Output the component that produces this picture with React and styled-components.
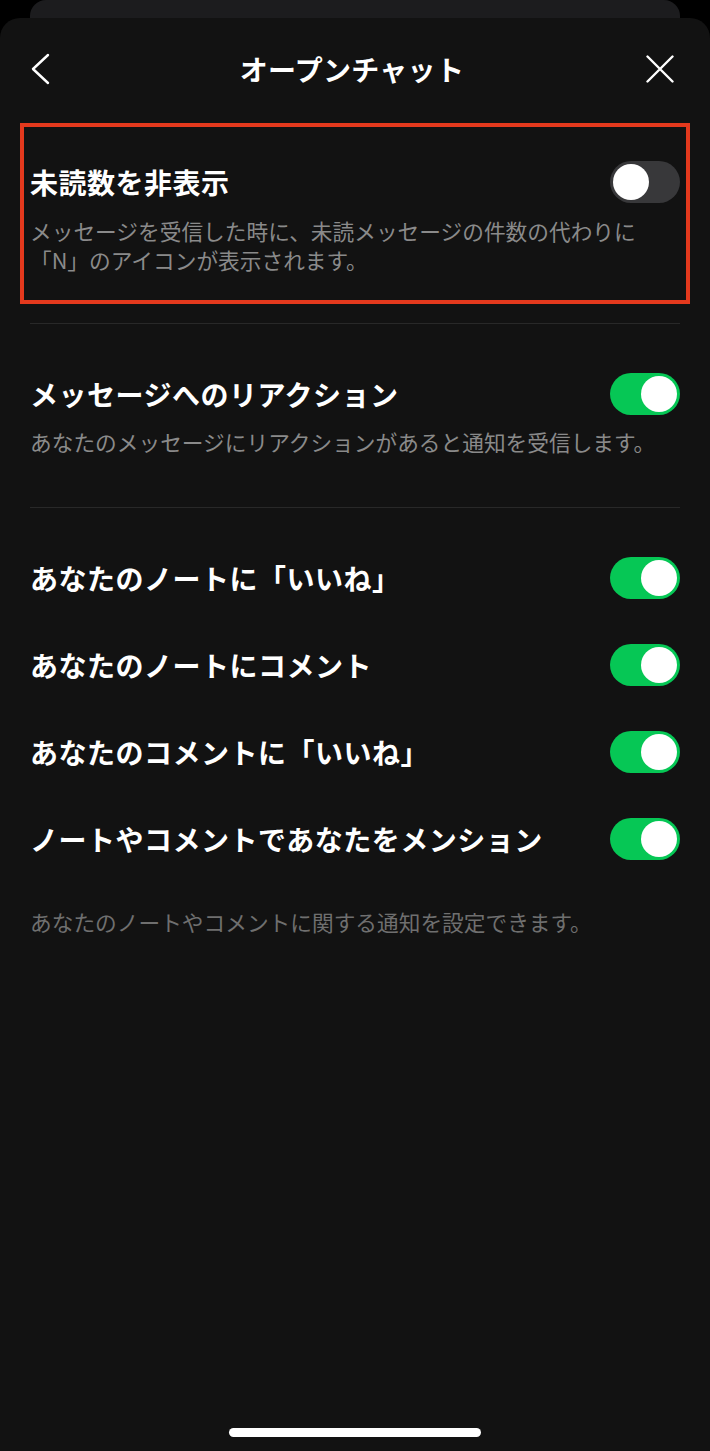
import React, { useState } from "react";
import styled, { createGlobalStyle } from "styled-components";

const GlobalStyle = createGlobalStyle`
  html, body {
    margin: 0;
    padding: 0;
    background: #000;
  }
  body {
    font-family: "Noto Sans CJK JP", "Noto Sans", sans-serif;
    -webkit-font-smoothing: antialiased;
  }
`;

const Page = styled.div`
  width: 710px;
  height: 1451px;
  background: #000;
  display: flex;
  flex-direction: column;
  overflow: hidden;
`;

const BackCard = styled.div`
  height: 18px;
  margin: 0 30px;
  background: #1c1c1e;
  border-radius: 16px 16px 0 0;
`;

const Sheet = styled.div`
  flex: 1;
  background: #121212;
  border-radius: 20px 20px 0 0;
  display: flex;
  flex-direction: column;
`;

const Header = styled.header`
  height: 102px;
  display: flex;
  align-items: center;
  justify-content: space-between;
  padding: 0 36px 0 30px;
`;

const IconButton = styled.button`
  width: 30px;
  height: 34px;
  padding: 0;
  border: none;
  background: none;
  color: #fff;
  display: flex;
  align-items: center;
  justify-content: ${(p) => (p.$end ? "flex-end" : "flex-start")};
  cursor: pointer;
`;

const Title = styled.h1`
  margin: 0;
  font-size: 28px;
  font-weight: 700;
  color: #fff;
  letter-spacing: 0.3px;
`;

const Group = styled.section`
  margin: ${(p) => p.$mt || 0}px 30px 0;
  padding: ${(p) => p.$pt}px 0 ${(p) => p.$pb}px;
  outline: ${(p) => (p.$highlight ? "4px solid #e4391d" : "none")};
  outline-offset: 6px;
  display: flex;
  flex-direction: column;
  gap: ${(p) => p.$gap || 0}px;
`;

const Divider = styled.hr`
  margin: ${(p) => p.$mt || 0}px 30px 0;
  border: none;
  height: 1px;
  background: #282828;
`;

const Row = styled.div`
  display: flex;
  align-items: center;
  justify-content: space-between;
  height: 42px;
`;

const RowLabel = styled.span`
  font-size: 28px;
  font-weight: 700;
  color: #fff;
  letter-spacing: 0.5px;
`;

const Desc = styled.p`
  margin: ${(p) => p.$mt || 0}px 0 0;
  font-size: 21.7px;
  line-height: 29px;
  color: ${(p) => (p.$dim ? "#6f6f6f" : "#8a8a8a")};
`;

const Track = styled.button`
  width: 70px;
  height: 42px;
  flex: none;
  border: none;
  padding: 3px;
  border-radius: 21px;
  background: ${(p) => (p.$on ? "#06c755" : "#38383a")};
  display: flex;
  justify-content: ${(p) => (p.$on ? "flex-end" : "flex-start")};
  cursor: pointer;
`;

const Knob = styled.span`
  width: 36px;
  height: 36px;
  border-radius: 50%;
  background: #fff;
`;

const Spacer = styled.div`
  flex: 1;
`;

const HomeBar = styled.div`
  width: 252px;
  height: 9px;
  border-radius: 5px;
  background: #fff;
  margin: 0 auto 14px;
`;

function Toggle({ on, onClick }) {
  return (
    <Track $on={on} onClick={onClick}>
      <Knob />
    </Track>
  );
}

const noteRows = [
  "あなたのノートに「いいね」",
  "あなたのノートにコメント",
  "あなたのコメントに「いいね」",
  "ノートやコメントであなたをメンション",
];

export default function App() {
  const [hideUnread, setHideUnread] = useState(false);
  const [reaction, setReaction] = useState(true);
  const [notes, setNotes] = useState([true, true, true, true]);

  return (
    <Page>
      <GlobalStyle />
      <BackCard />
      <Sheet>
        <Header>
          <IconButton aria-label="戻る">
            <svg width="22" height="32" viewBox="0 0 22 32" fill="none">
              <path d="M18 2 L3 16 L18 30" stroke="#fff" strokeWidth="2.4" strokeLinecap="round" strokeLinejoin="round" />
            </svg>
          </IconButton>
          <Title>オープンチャット</Title>
          <IconButton $end aria-label="閉じる">
            <svg width="28" height="28" viewBox="0 0 28 28" fill="none">
              <path d="M1.5 1.5 L26.5 26.5 M26.5 1.5 L1.5 26.5" stroke="#fff" strokeWidth="2.4" strokeLinecap="round" />
            </svg>
          </IconButton>
        </Header>

        <Group $highlight $mt={13} $pt={28} $pb={20}>
          <Row>
            <RowLabel>未読数を非表示</RowLabel>
            <Toggle on={hideUnread} onClick={() => setHideUnread(!hideUnread)} />
          </Row>
          <Desc $mt={13}>
            メッセージを受信した時に、未読メッセージの件数の代わりに
            <br />
            「N」のアイコンが表示されます。
          </Desc>
        </Group>

        <Divider $mt={29} />

        <Group $pt={49} $pb={51}>
          <Row>
            <RowLabel>メッセージへのリアクション</RowLabel>
            <Toggle on={reaction} onClick={() => setReaction(!reaction)} />
          </Row>
          <Desc $mt={12}>あなたのメッセージにリアクションがあると通知を受信します。</Desc>
        </Group>

        <Divider />

        <Group $pt={49} $pb={0} $gap={45}>
          {noteRows.map((label, i) => (
            <Row key={label}>
              <RowLabel>{label}</RowLabel>
              <Toggle
                on={notes[i]}
                onClick={() => setNotes(notes.map((v, j) => (j === i ? !v : v)))}
              />
            </Row>
          ))}
        </Group>

        <Group $pt={47} $pb={0}>
          <Desc $dim>あなたのノートやコメントに関する通知を設定できます。</Desc>
        </Group>

        <Spacer />
        <HomeBar />
      </Sheet>
    </Page>
  );
}
